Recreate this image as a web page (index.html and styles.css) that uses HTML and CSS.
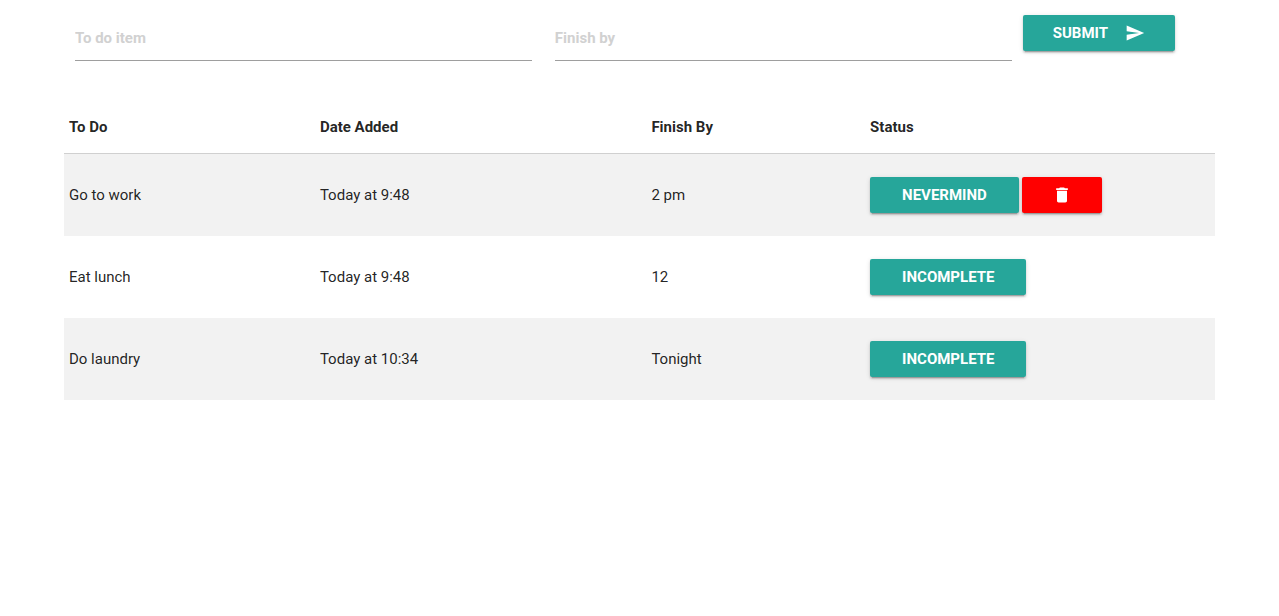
FILE: index.html
```html
<!DOCTYPE html>
<html lang="en">
<head>
<meta charset="utf-8">
<title>To Do</title>
<link rel="stylesheet" href="styles.css">
</head>
<body>
<main class="container">
  <form class="entry">
    <input class="field" type="text" aria-label="To do item" placeholder="To do item">
    <input class="field" type="text" aria-label="Finish by" placeholder="Finish by">
    <button class="btn submit" type="button">Submit
      <svg class="icon" viewBox="0 0 24 24" aria-hidden="true"><path d="M2.01 21L23 12 2.01 3 2 10l15 2-15 2z"/></svg>
    </button>
  </form>
  <table class="tasks">
    <thead>
      <tr><th class="col-todo">To Do</th><th class="col-added">Date Added</th><th class="col-finish">Finish By</th><th>Status</th></tr>
    </thead>
    <tbody>
      <tr>
        <td>Go to work</td><td>Today at 9:48</td><td>2 pm</td>
        <td><div class="actions"><button class="btn" type="button">Nevermind</button><button class="btn delete" type="button" aria-label="Delete"><svg class="icon" viewBox="0 0 24 24" aria-hidden="true"><path d="M6 19c0 1.100.9 2 2 2h8c1.100 0 2-.9 2-2V7H6v12zM19 4h-3.500l-1-1h-5l-1 1H5v2h14V4z"/></svg></button></div></td>
      </tr>
      <tr>
        <td>Eat lunch</td><td>Today at 9:48</td><td>12</td>
        <td><div class="actions"><button class="btn" type="button">Incomplete</button></div></td>
      </tr>
      <tr>
        <td>Do laundry</td><td>Today at 10:34</td><td>Tonight</td>
        <td><div class="actions"><button class="btn" type="button">Incomplete</button></div></td>
      </tr>
    </tbody>
  </table>
</main>
</body>
</html>
```
FILE: styles.css
```css
* { box-sizing: border-box; }

body {
  margin: 0;
  background: #fff;
  color: rgba(0, 0, 0, 0.87);
  font: 15px/22px Roboto, sans-serif;
}

.container {
  width: 90%;
  margin: 0 auto;
}

.entry {
  display: flex;
  align-items: flex-start;
  gap: 23px;
  padding: 15px 40px 0 11px;
}

.field {
  flex: 1;
  min-width: 0;
  height: 46px;
  padding: 0;
  border: 0;
  border-bottom: 1px solid #9e9e9e;
  outline: 0;
  background: transparent;
  color: inherit;
  font: bold 15px/22px Roboto, sans-serif;
}

.field::placeholder { color: #d1d1d1; opacity: 1; }

.btn {
  display: inline-flex;
  align-items: center;
  justify-content: center;
  height: 36px;
  padding: 0 32px;
  border: 0;
  border-radius: 2px;
  background: #26a69a;
  box-shadow: 0 2px 2px 0 rgba(0, 0, 0, 0.14), 0 1px 5px 0 rgba(0, 0, 0, 0.12), 0 3px 1px -2px rgba(0, 0, 0, 0.2);
  color: #fff;
  font: bold 15px/36px Roboto, sans-serif;
  text-transform: uppercase;
  cursor: pointer;
}

.submit {
  gap: 17px;
  margin-left: -12px;
  padding: 0 30px;
}

.icon {
  width: 20px;
  height: 20px;
  fill: currentColor;
}

.tasks {
  width: 100%;
  margin-top: 39px;
  border-spacing: 0;
  table-layout: fixed;
}

.tasks tbody tr:nth-child(odd) { background: #f2f2f2; }

th, td {
  padding: 15px 5px;
  text-align: left;
  vertical-align: middle;
}

th {
  height: 54px;
  border-bottom: 1px solid #d0d0d0;
}

td { height: 82px; }

.col-todo { width: 21.8%; }
.col-added { width: 28.8%; }
.col-finish { width: 19%; }

.actions {
  display: flex;
  gap: 3px;
}

.delete {
  padding: 0 30px;
  background: #f00;
}
```
